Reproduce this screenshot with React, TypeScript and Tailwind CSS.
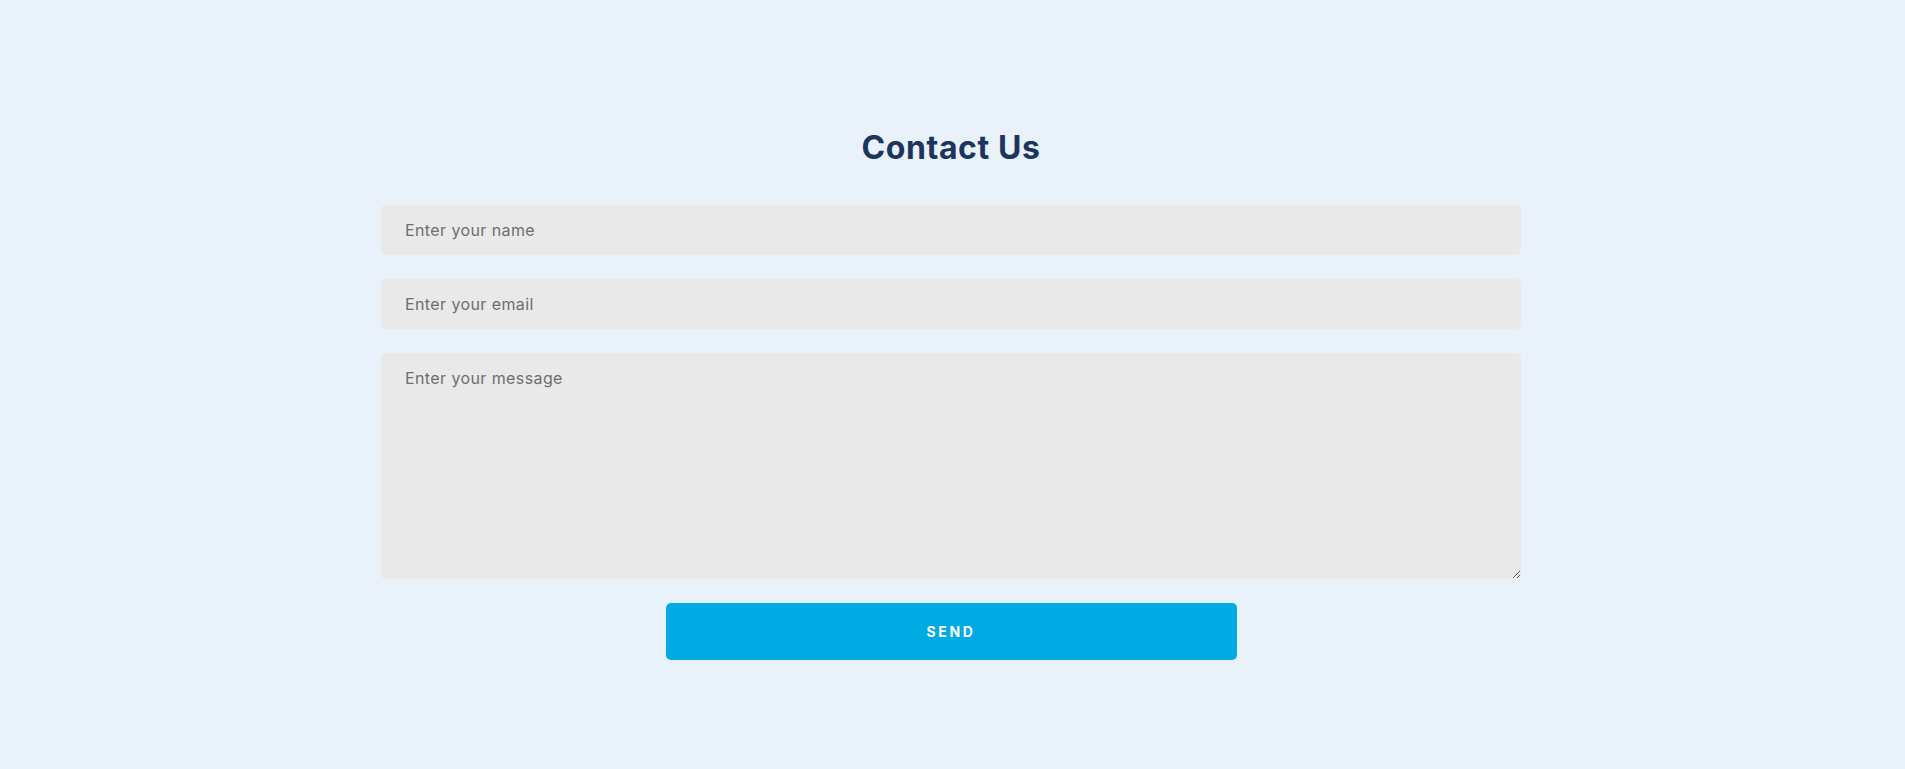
export default function App() {
  return (
    <div
      className="min-h-screen w-full bg-[#e9f1fa] flex flex-col items-center"
      style={{ fontFamily: "Inter, 'Open Sans', sans-serif" }}
    >
      <div className="w-[1140px] mr-[3px] pt-[124px] flex flex-col items-center">
        <h2 className="text-[32px] leading-[48px] font-bold text-[#1c355e] tracking-[0.6px]">Contact Us</h2>
        <form className="w-full mt-[33px] flex flex-col gap-[24px] items-center" onSubmit={(e) => e.preventDefault()}>
          <input
            type="text"
            placeholder="Enter your name"
            className="w-full h-[50px] rounded-[5px] bg-[#e9e9e9] px-[24px] text-[16px] tracking-[0.4px] text-[#333] placeholder:text-[#6e6e6e] outline-none"
          />
          <input
            type="email"
            placeholder="Enter your email"
            className="w-full h-[50px] rounded-[5px] bg-[#e9e9e9] px-[24px] text-[16px] tracking-[0.4px] text-[#333] placeholder:text-[#6e6e6e] outline-none"
          />
          <textarea
            placeholder="Enter your message"
            className="w-full h-[226px] rounded-[5px] bg-[#e9e9e9] px-[24px] pt-[13px] pb-[12px] text-[16px] leading-[24px] tracking-[0.4px] text-[#333] placeholder:text-[#6e6e6e] outline-none block"
          />
          <button
            type="submit"
            className="w-[571px] h-[57px] rounded-[5px] bg-[#00abe3] text-white text-[14px] font-bold tracking-[2.6px]"
          >
            SEND
          </button>
        </form>
      </div>
    </div>
  );
}
